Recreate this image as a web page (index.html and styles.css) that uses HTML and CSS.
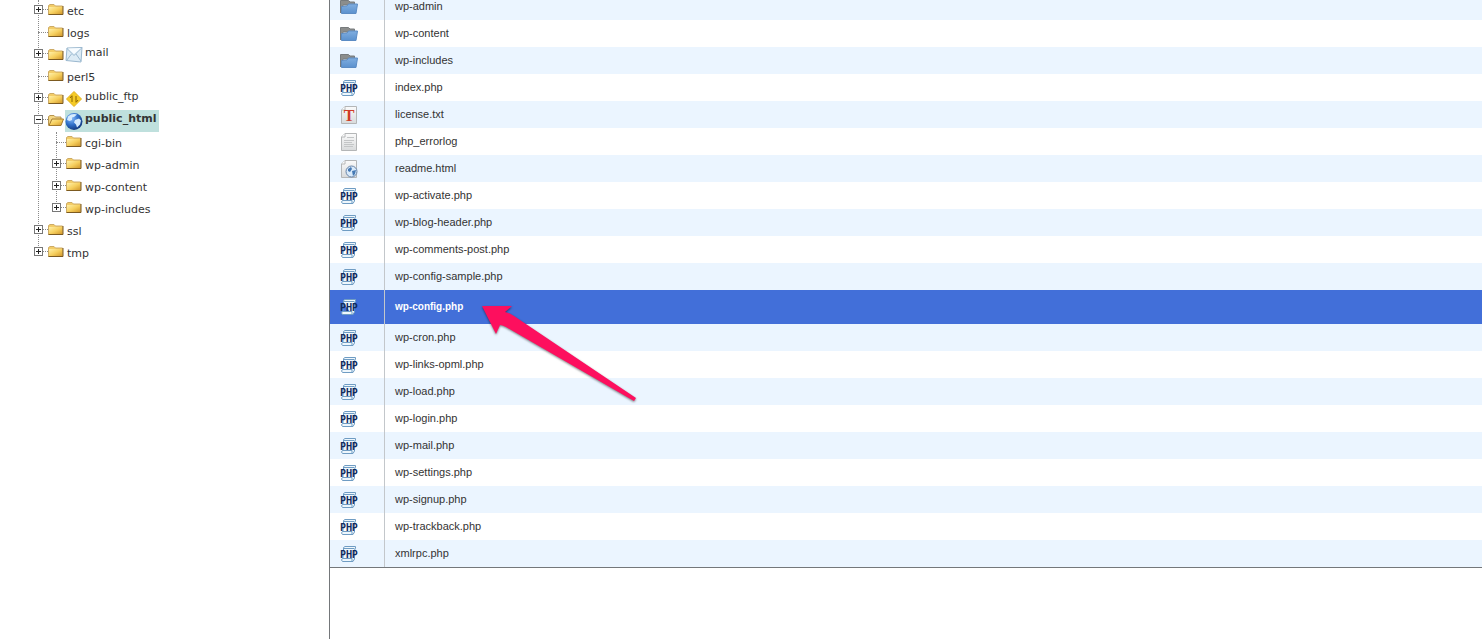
FILE: index.html
```
<!DOCTYPE html>
<html lang="en">
<head>
<meta charset="utf-8">
<title>File Manager</title>
<link rel="stylesheet" href="styles.css">
</head>
<body>
<svg class="defs" aria-hidden="true">
  <defs>
    <linearGradient id="gold" x1="0" y1="0" x2="1" y2="1"><stop offset="0" stop-color="#fff0a8"/><stop offset=".5" stop-color="#f6cf5e"/><stop offset="1" stop-color="#cf9428"/></linearGradient>
    <linearGradient id="blue" x1="0" y1="0" x2="0" y2="1"><stop offset="0" stop-color="#80aee0"/><stop offset="1" stop-color="#5b91ce"/></linearGradient>
    <linearGradient id="paper" x1="0" y1="0" x2="0" y2="1"><stop offset="0" stop-color="#fbfbfb"/><stop offset="1" stop-color="#d8dadb"/></linearGradient>
    <radialGradient id="ball" cx=".35" cy=".3" r=".8"><stop offset="0" stop-color="#8cc0ff"/><stop offset=".5" stop-color="#2f6fc8"/><stop offset="1" stop-color="#0c2c70"/></radialGradient>
    <symbol id="folder" viewBox="0 0 16 13">
      <path d="M.5 11.500V2.500L2 1.500h4l1.500 1.500H14.500v8.500z" fill="#f3cd68" stroke="#cdab66"/>
      <path d="M1 4h13.500v7.500H1z" fill="url(#gold)"/><path d="M.5 11.500h14.500V3" fill="none" stroke="#7c5a20"/>
    </symbol>
    <symbol id="folder-open" viewBox="0 0 16 13">
      <path d="M.5 11.500V2.500L2 1.500h4l1.500 1.500H13V5" fill="#f3d684" stroke="#b8954f"/>
      <path d="M1 11.500L4 5h11.500L13 11.500z" fill="url(#gold)" stroke="#a47a2c"/>
    </symbol>
    <symbol id="mail" viewBox="0 0 18 18">
      <path d="M2 2l15-.5-1 14.500L1 14.500z" fill="#dcebf5" stroke="#9bb8cf"/>
      <path d="M2 2.500l7 7 8-8M1.500 14.500l5-6.500M16 15l-5-7" fill="none" stroke="#9bb9d0"/>
      <path d="M3 2.500l6 5.500 7-6z" fill="#f8fcff"/>
    </symbol>
    <symbol id="ftp" viewBox="0 0 18 18">
      <path d="M9 1.500L16.500 9 9 16.500 1.500 9z" fill="#f5cb26" stroke="#e3b11e"/>
      <path d="M7 12V6M5 8l2-2.500M11 6v6M13 10l-2 2.500" fill="none" stroke="#8a6200"/>
    </symbol>
    <symbol id="globe" viewBox="0 0 18 18">
      <circle cx="9" cy="9.500" r="8.500" fill="url(#ball)"/>
      <path d="M3 4.500Q7 1 12 2.500L9 5 7 5.500 7 8 4.500 9 2 8zM10 8l4-1.500 2 2-1 4-3 3-1-3-2-2z" fill="#d6ebfd"/>
    </symbol>
    <symbol id="dir" viewBox="0 0 18 16">
      <path d="M.5 14V1.500h8L10 3h4.500v3H3z" fill="#8b8d8c" stroke="#777b7d"/>
      <path d="M1.500 14.500V7.500L7 7l1.500-2h9L16 14.500z" fill="url(#blue)" stroke="#5c8cc4"/>
    </symbol>
    <symbol id="php" viewBox="0 0 18 18">
      <path d="M3.500 5V2.500L5 1.500h10.500v2L14.500 5v9L13 16.500H2.500L1.500 15l1-1.500h9.500v3M3.500 3.500h11M3 5v8.500" fill="#eef7fd" stroke="#6f9cc3"/>
      <text class="php-text" x="9" y="13" text-anchor="middle">PHP</text>
    </symbol>
    <symbol id="page" viewBox="0 0 18 18">
      <path d="M5 .5h11.500v17h-15V4z" fill="url(#paper)" stroke="#b4b6b7"/><path d="M5 .5V4H1.500" fill="#fff" stroke="#b4b6b7"/>
    </symbol>
  </defs>
</svg>
<div class="manager">
  <nav class="sidebar" aria-label="Folders">
    <ul class="tree">
      <li><div class="node"><button class="toggle" aria-label="Expand etc"></button><svg class="folder"><use href="#folder"/></svg><a href="#etc">etc</a></div></li>
      <li><div class="node leaf"><svg class="folder"><use href="#folder"/></svg><a href="#logs">logs</a></div></li>
      <li><div class="node special"><button class="toggle" aria-label="Expand mail"></button><svg class="folder"><use href="#folder"/></svg><a href="#mailbox"><svg class="badge"><use href="#mail"/></svg><span>mail</span></a></div></li>
      <li><div class="node leaf"><svg class="folder"><use href="#folder"/></svg><a href="#perl5">perl5</a></div></li>
      <li><div class="node special"><button class="toggle" aria-label="Expand public_ftp"></button><svg class="folder"><use href="#folder"/></svg><a href="#public_ftp"><svg class="badge"><use href="#ftp"/></svg><span>public_ftp</span></a></div></li>
      <li><div class="node special current"><button class="toggle open" aria-label="Collapse public_html"></button><svg class="folder"><use href="#folder-open"/></svg><a href="#public_html"><svg class="badge"><use href="#globe"/></svg><span>public_html</span></a></div>
        <ul class="branch">
          <li><div class="node leaf"><svg class="folder"><use href="#folder"/></svg><a href="#cgi-bin">cgi-bin</a></div></li>
          <li><div class="node"><button class="toggle" aria-label="Expand wp-admin"></button><svg class="folder"><use href="#folder"/></svg><a href="#wp-admin">wp-admin</a></div></li>
          <li><div class="node"><button class="toggle" aria-label="Expand wp-content"></button><svg class="folder"><use href="#folder"/></svg><a href="#wp-content">wp-content</a></div></li>
          <li><div class="node"><button class="toggle" aria-label="Expand wp-includes"></button><svg class="folder"><use href="#folder"/></svg><a href="#wp-includes">wp-includes</a></div></li>
        </ul>
      </li>
      <li><div class="node"><button class="toggle" aria-label="Expand ssl"></button><svg class="folder"><use href="#folder"/></svg><a href="#ssl">ssl</a></div></li>
      <li><div class="node"><button class="toggle" aria-label="Expand tmp"></button><svg class="folder"><use href="#folder"/></svg><a href="#tmp">tmp</a></div></li>
    </ul>
  </nav>
  <main class="content">
    <table class="files">
      <tbody>
        <tr><td class="kind"><svg class="dir"><use href="#dir"/></svg></td><td>wp-admin</td></tr>
        <tr><td class="kind"><svg class="dir"><use href="#dir"/></svg></td><td>wp-content</td></tr>
        <tr><td class="kind"><svg class="dir"><use href="#dir"/></svg></td><td>wp-includes</td></tr>
        <tr><td class="kind"><svg><use href="#php"/></svg></td><td>index.php</td></tr>
        <tr><td class="kind"><svg viewBox="0 0 18 18"><use href="#page"/><text class="letter" x="9" y="15" text-anchor="middle">T</text></svg></td><td>license.txt</td></tr>
        <tr><td class="kind"><svg viewBox="0 0 18 18"><use href="#page"/><path d="M7 4.500h7M4 7.500h10M4 9.500h8M4 11.500h10M4 13.500h9" stroke="#c3c5c6"/></svg></td><td>php_errorlog</td></tr>
        <tr><td class="kind"><svg viewBox="0 0 18 18"><use href="#page"/><circle cx="11.500" cy="11.500" r="5.500" fill="#d9eafa" stroke="#6884a8"/><path d="M8 9l3-2 1 2-2 3-2-1zM12 11l4-1-1 4-2 2zM9 14l2 1" fill="#4579b4"/></svg></td><td>readme.html</td></tr>
        <tr><td class="kind"><svg><use href="#php"/></svg></td><td>wp-activate.php</td></tr>
        <tr><td class="kind"><svg><use href="#php"/></svg></td><td>wp-blog-header.php</td></tr>
        <tr><td class="kind"><svg><use href="#php"/></svg></td><td>wp-comments-post.php</td></tr>
        <tr><td class="kind"><svg><use href="#php"/></svg></td><td>wp-config-sample.php</td></tr>
        <tr class="selected"><td class="kind"><svg><use href="#php"/></svg></td><td>wp-config.php<svg class="pointer" viewBox="0 0 160 102" aria-hidden="true"><path d="M1 3L31 3 24 9Q29 10 33 13L155 95 153 98 25 24Q21 22 19 22L15 31z" fill="#fd0f5e"/></svg></td></tr>
        <tr><td class="kind"><svg><use href="#php"/></svg></td><td>wp-cron.php</td></tr>
        <tr><td class="kind"><svg><use href="#php"/></svg></td><td>wp-links-opml.php</td></tr>
        <tr><td class="kind"><svg><use href="#php"/></svg></td><td>wp-load.php</td></tr>
        <tr><td class="kind"><svg><use href="#php"/></svg></td><td>wp-login.php</td></tr>
        <tr><td class="kind"><svg><use href="#php"/></svg></td><td>wp-mail.php</td></tr>
        <tr><td class="kind"><svg><use href="#php"/></svg></td><td>wp-settings.php</td></tr>
        <tr><td class="kind"><svg><use href="#php"/></svg></td><td>wp-signup.php</td></tr>
        <tr><td class="kind"><svg><use href="#php"/></svg></td><td>wp-trackback.php</td></tr>
        <tr><td class="kind"><svg><use href="#php"/></svg></td><td>xmlrpc.php</td></tr>
      </tbody>
    </table>
  </main>
</div>
</body>
</html>
```
FILE: styles.css
```
* { box-sizing: border-box; }
body { margin: 0; background: #fff; color: #333; font-family: "Liberation Sans", Arial, sans-serif; font-size: 11px; }
.defs { position: absolute; width: 0; height: 0; }
.manager { display: flex; min-height: 100vh; overflow: hidden; }

.sidebar { flex: none; width: 330px; border-right: 1px solid #74777a; padding-left: 34px; font-family: "DejaVu Sans", Verdana, sans-serif; }
.tree, .branch { position: relative; list-style: none; margin: 0; padding: 0; }
.branch { padding-left: 18px; }
.tree::before, .branch::before { content: ""; position: absolute; top: 0; bottom: 12px; left: 4px; border-left: 1px dotted #8a8a8a; }
.branch::before { left: 22px; }
.node { position: relative; display: flex; align-items: center; height: 22px; }
.node a { display: flex; align-items: center; height: 22px; margin-left: 3px; color: #333; text-decoration: none; }
.toggle { position: relative; flex: none; width: 9px; height: 9px; margin: 0 5px 3px 0; padding: 0; border: 1px solid #777; background: linear-gradient(#222, #222) center / 5px 1px no-repeat, linear-gradient(#222, #222) center / 1px 5px no-repeat, #fff; }
.toggle.open { background: linear-gradient(#222, #222) center / 5px 1px no-repeat, #fff; }
.toggle::after { content: ""; position: absolute; left: 8px; top: 3px; width: 5px; border-top: 1px dotted #8a8a8a; }
.leaf::before { content: ""; width: 10px; margin: 0 0 2px 4px; border-top: 1px dotted #8a8a8a; }
.folder { flex: none; width: 16px; height: 13px; margin-bottom: 3px; }
.special .folder { margin-bottom: 1px; }
.special .toggle { margin-bottom: 3px; }
.node.special a { margin-left: 1px; padding-right: 3px; }
.badge { width: 18px; height: 18px; margin-right: 2px; }
.special span { padding-bottom: 5px; }
.current a { background: #bfe0dd; font-weight: bold; }

.content { flex: 1; min-width: 0; }
.files { width: 100%; margin-top: -7px; border-collapse: separate; border-spacing: 0; border-bottom: 1px solid #74777a; }
.files td { height: 27px; padding: 0 10px 2px; vertical-align: middle; }
.files tr:nth-child(odd) { background: #ebf5ff; }
.files .kind { width: 55px; border-right: 1px solid #c3c7cb; }
.kind svg { display: block; width: 18px; height: 18px; margin-top: 2px; }
.kind .dir { height: 16px; }
.files .selected { background: #426fd9; color: #fff; font-size: 10px; font-weight: bold; }
.files .selected td { position: relative; height: 34px; }
.php-text { font: bold 10px "Liberation Sans Narrow", "Roboto Condensed", Roboto, sans-serif; fill: #102a5c; }
.letter { font: bold 16px "Liberation Serif", serif; fill: #d03c26; }
.pointer { position: absolute; left: 96px; top: 13px; width: 160px; height: 102px; filter: drop-shadow(0 1px 1px rgba(0, 0, 0, .5)); }
```
